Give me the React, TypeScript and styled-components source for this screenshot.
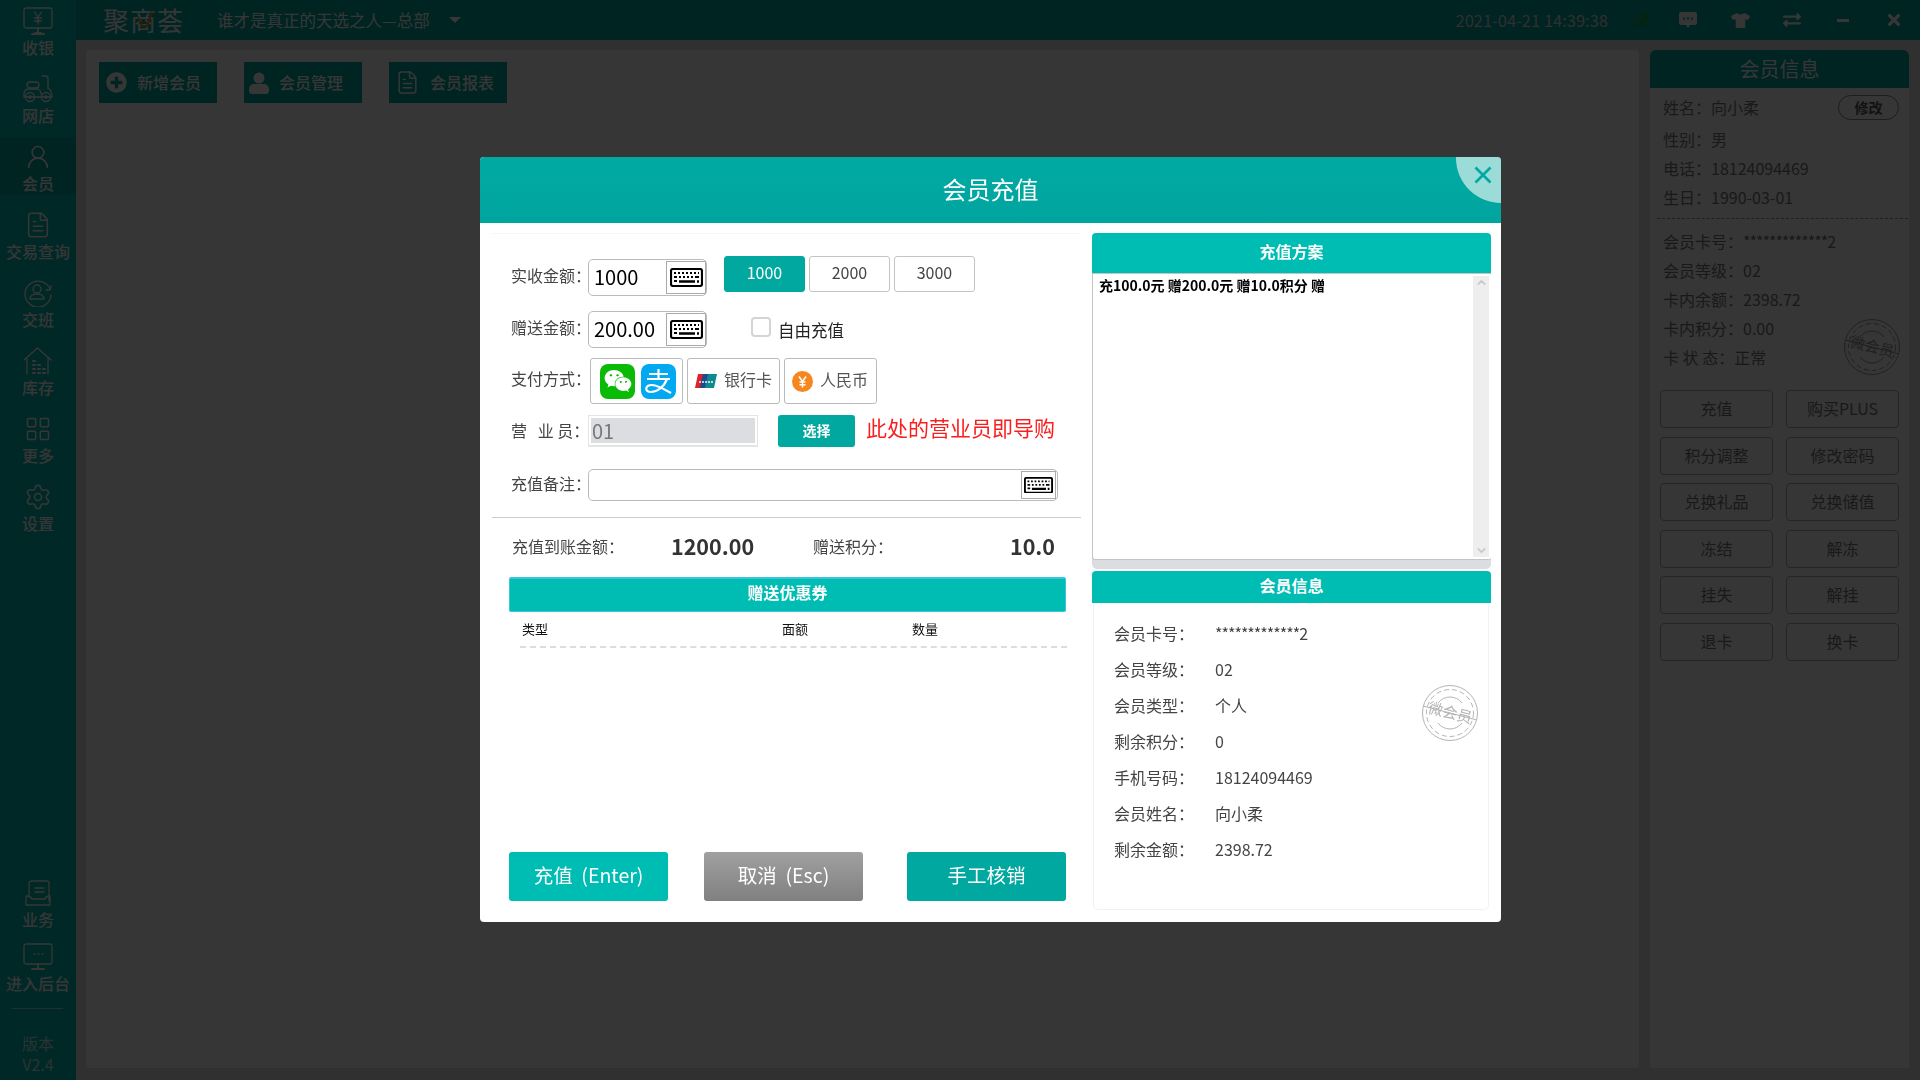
import React from 'react'
import styled, { createGlobalStyle } from 'styled-components'
import { ChevronDown, ChevronUp, FileText, LayoutGrid, Settings, UserRound } from 'lucide-react'
import { FaExchangeAlt, FaPlusCircle, FaTimes, FaTshirt, FaWeixin } from 'react-icons/fa'

const TEAL = '#00a8a0'
const TEAL_LIGHT = '#00bdb4'

const GlobalStyle = createGlobalStyle`
  html, body {
    margin: 0;
    padding: 0;
    background: #e0e0e0;
  }
  * {
    box-sizing: border-box;
  }
  body {
    font-family: "Noto Sans CJK SC", "Noto Sans", sans-serif;
    font-size: 16px;
    color: #333;
  }
`

/* ---------- page behind the dialog ---------- */

const Page = styled.div`
  display: flex;
  width: 1920px;
  height: 1080px;
  overflow: hidden;
`

const Sidebar = styled.nav`
  display: flex;
  flex: 0 0 76px;
  flex-direction: column;
  padding-top: 1px;
  background: ${TEAL_LIGHT};
  color: #fff;
`

const NavGroup = styled.div`
  display: flex;
  flex-direction: column;
  gap: 10px;
`

const NavBottom = styled(NavGroup)`
  margin-top: auto;
  gap: 6px;
`

const NavItem = styled.div<{ $active?: boolean }>`
  display: flex;
  flex-direction: column;
  align-items: center;
  height: 58px;
  padding-top: 6px;
  background: ${props => (props.$active ? TEAL : 'transparent')};
  svg {
    display: block;
    height: 28px;
    width: 30px;
  }
`

const NavLabel = styled.span`
  margin-top: 3px;
  font-size: 16px;
  font-weight: 500;
  line-height: 18px;
  white-space: nowrap;
`

const NavRule = styled.div`
  height: 1px;
  margin: 13px 13px 0 12px;
  background: rgba(255, 255, 255, 0.6);
`

const Version = styled.div`
  margin: 24px 0 5px;
  text-align: center;
  color: rgba(255, 255, 255, 0.75);
  div {
    line-height: 21px;
  }
`

const Main = styled.div`
  display: flex;
  flex: 1;
  flex-direction: column;
  min-width: 0;
`

const TopBar = styled.header`
  display: flex;
  flex: 0 0 40px;
  align-items: center;
  padding-left: 27px;
  background: ${TEAL};
  color: #fff;
`

const Logo = styled.div`
  position: relative;
  font-size: 26px;
  letter-spacing: 1px;
  line-height: 40px;
  white-space: nowrap;
  svg {
    position: absolute;
    left: 34px;
    top: 11px;
  }
`

const Branch = styled.div`
  margin-left: 33px;
  font-size: 16.5px;
  white-space: nowrap;
`

const Caret = styled.div`
  width: 0;
  height: 0;
  margin-left: 19px;
  border-left: 6px solid transparent;
  border-right: 6px solid transparent;
  border-top: 6px solid #fff;
`

const Clock = styled.div`
  margin-left: auto;
  margin-right: 12px;
  font-size: 16.5px;
  color: #ddd;
  white-space: nowrap;
`

const TopIcon = styled.div<{ $w: number }>`
  display: flex;
  flex: 0 0 ${props => props.$w}px;
  align-items: center;
  justify-content: center;
`

const Workspace = styled.div`
  display: flex;
  flex: 1;
  gap: 11px;
  padding: 10px 11px 12px 10px;
`

const Board = styled.section`
  display: flex;
  flex: 1;
  align-items: flex-start;
  gap: 27px;
  padding: 12px 13px;
  border-radius: 4px;
  background: #fff;
`

const ToolButton = styled.div<{ $pad: number }>`
  display: flex;
  align-items: center;
  gap: 10px;
  width: 118px;
  height: 41px;
  padding: 0 0 2px ${props => props.$pad}px;
  background: ${TEAL};
  color: #fff;
  font-weight: 500;
`

const ToolIcon = styled.div`
  display: flex;
  flex: 0 0 21px;
  align-items: center;
  justify-content: center;
  margin-top: 2px;
`

const MemberPanel = styled.aside`
  position: relative;
  display: flex;
  flex: 0 0 259px;
  flex-direction: column;
  border-radius: 6px 6px 0 0;
  background: #fff;
`

const MemberTitle = styled.div`
  height: 38px;
  border-radius: 6px 6px 0 0;
  background: ${TEAL};
  color: #fff;
  font-size: 20px;
  line-height: 38px;
  text-align: center;
`

const InfoBlock = styled.div`
  margin: 5px 1px 0 7px;
  padding: 0 0 6px 6px;
  border-bottom: 1px dashed #999;
  color: #777;
`

const InfoRow = styled.div<{ $gap?: number }>`
  display: flex;
  align-items: center;
  justify-content: space-between;
  height: 29px;
  margin-top: ${props => props.$gap ?? 0}px;
  line-height: 29px;
  white-space: pre;
`

const EditPill = styled.div`
  width: 61px;
  height: 25px;
  margin-right: 9px;
  border: 1px solid #888;
  border-radius: 13px;
  color: #555;
  font-size: 14px;
  font-weight: 700;
  line-height: 22px;
  text-align: center;
`

const CardBlock = styled.div`
  margin-top: 8px;
  padding-left: 13px;
  color: #777;
`

const Stars = styled.span`
  letter-spacing: -1px;
`

const ActionGrid = styled.div`
  display: grid;
  grid-template-columns: 113px 113px;
  grid-auto-rows: 38px;
  gap: 8.6px 13px;
  margin-top: 18px;
  padding: 0 10px;
`

const ActionButton = styled.div`
  border: 1px solid #b0b0b0;
  border-radius: 4px;
  color: #777;
  line-height: 34px;
  text-align: center;
`

const StampWrap = styled.div<{ $right: number; $top: number }>`
  position: absolute;
  right: ${props => props.$right}px;
  top: ${props => props.$top}px;
  width: 58px;
  height: 58px;
`

/* ---------- dialog ---------- */

const Overlay = styled.div`
  position: fixed;
  inset: 0;
  padding: 157px 0 0 480px;
  background: rgba(0, 0, 0, 0.79);
`

const Dialog = styled.div`
  position: relative;
  display: flex;
  flex-direction: column;
  width: 1021px;
  height: 765px;
  overflow: hidden;
  border-radius: 4px;
  background: #fff;
`

const DialogHead = styled.div`
  flex: 0 0 66px;
  background: linear-gradient(#00aaa3, #00a59e);
  color: #fff;
  font-size: 24px;
  line-height: 63px;
  text-align: center;
`

const CloseCorner = styled.div`
  position: absolute;
  top: 0;
  right: 0;
  display: flex;
  align-items: flex-start;
  justify-content: flex-end;
  width: 45px;
  height: 46px;
  padding: 9px 9px 0 0;
  border-bottom-left-radius: 46px;
  background: #9bdcd8;
  color: ${TEAL};
`

const DialogBody = styled.div`
  display: flex;
  flex: 1;
  min-height: 0;
`

const LeftCol = styled.div`
  display: flex;
  flex: 0 0 589px;
  flex-direction: column;
  margin: 10px 0 0 12px;
  padding-top: 22px;
  border-top: 1px solid #f6f6f6;
`

const FormRow = styled.div<{ $top?: number; $h: number }>`
  display: flex;
  align-items: center;
  height: ${props => props.$h}px;
  margin-top: ${props => props.$top ?? 0}px;
  padding-left: 19px;
`

const FieldLabel = styled.label<{ $up: number }>`
  flex: 0 0 77px;
  min-width: 0;
  margin-bottom: ${props => props.$up}px;
  font-size: 16px;
  color: #444;
  white-space: pre;
`

const AmountField = styled.div<{ $down?: number }>`
  display: flex;
  align-items: center;
  justify-content: space-between;
  width: 119px;
  height: 37px;
  margin-top: ${props => props.$down ?? 0}px;
  padding: 1px 0 1px 5px;
  border: 1px solid #bbb;
  border-radius: 5px;
  color: #000;
  font-size: 20px;
`

const AmountText = styled.span`
  margin-bottom: 2px;
`

const KeyButton = styled.div<{ $w: number }>`
  display: flex;
  flex: 0 0 ${props => props.$w}px;
  align-items: center;
  justify-content: center;
  height: 100%;
  border: 1px solid #aaa;
`

const QuickGroup = styled.div`
  display: flex;
  align-self: flex-start;
  gap: 4px;
  margin-left: 17px;
`

const QuickButton = styled.div<{ $on?: boolean }>`
  width: 81px;
  height: 36px;
  border: 1px solid ${props => (props.$on ? TEAL : '#c4c4c4')};
  border-radius: 3px;
  background: ${props => (props.$on ? TEAL : '#fff')};
  color: ${props => (props.$on ? '#fff' : '#444')};
  line-height: 31px;
  text-align: center;
`

const Check = styled.div`
  width: 20px;
  height: 20px;
  margin: -5px 0 0 44px;
  border: 2px solid #d4d4d4;
  border-radius: 4px;
`

const CheckText = styled.span`
  margin-left: 7px;
  font-size: 16.5px;
  color: #222;
`

const PayRow = styled.div`
  display: flex;
  gap: 4px;
  margin-left: 2px;
`

const PayTile = styled.div<{ $pad?: number }>`
  display: flex;
  align-items: center;
  width: 93px;
  height: 46px;
  padding-left: ${props => props.$pad ?? 0}px;
  border: 1px solid #bbb;
  border-radius: 3px;
  color: #555;
  font-size: 16px;
  white-space: nowrap;
`

const BrandTile = styled.div<{ $bg: string; $left: number }>`
  display: flex;
  align-items: center;
  justify-content: center;
  width: 35px;
  height: 35px;
  margin-left: ${props => props.$left}px;
  border-radius: 8px;
  background: ${props => props.$bg};
  color: #fff;
`

const PayText = styled.span`
  margin: 0 0 4px 7px;
`

const StaffField = styled.div`
  width: 170px;
  height: 32px;
  padding: 2px;
  border: 1px solid #e4e4e4;
  border-width: 1px 1px 2px 1px;
  color: #777;
  font-size: 20px;
  line-height: 25px;
`

const StaffValue = styled.div`
  width: 100%;
  height: 100%;
  padding-left: 1px;
  background: #dcdde0;
`

const PickButton = styled.div`
  width: 77px;
  height: 32px;
  margin-left: 20px;
  border-radius: 3px;
  background: ${TEAL};
  color: #fff;
  font-size: 14px;
  font-weight: 700;
  line-height: 31px;
  text-align: center;
`

const RedNote = styled.span`
  margin: -9px 0 0 11px;
  color: #fa1e1e;
  font-size: 21px;
  white-space: nowrap;
`

const NoteField = styled.div`
  display: flex;
  justify-content: flex-end;
  width: 470px;
  height: 32px;
  padding: 1px;
  border: 1px solid #bbb;
  border-radius: 5px;
`

const Rule = styled.div`
  height: 1px;
  margin-top: 16px;
  background: #ccc;
`

const Summary = styled.div`
  display: grid;
  grid-template-columns: 159px 142px 1fr auto;
  align-items: center;
  height: 26px;
  margin: 15px 0 4px;
  padding: 0 26px 0 20px;
  color: #444;
  line-height: 26px;
`

const SumValue = styled.strong`
  color: #333;
  font-size: 21.5px;
  font-weight: 700;
  line-height: 26px;
`

const CouponBar = styled.div`
  height: 35px;
  margin: 14px 15px 0 17px;
  border: 1px solid #3cc6dc;
  border-top-width: 2px;
  border-radius: 2px;
  background: ${TEAL_LIGHT};
  color: #fff;
  font-weight: 700;
  line-height: 26px;
  text-align: center;
`

const CouponHead = styled.div`
  display: grid;
  grid-template-columns: 260px 130px 1fr;
  align-items: center;
  height: 36px;
  margin: 0 14px 0 28px;
  padding: 0 0 2px 2px;
  border-bottom: 2px dashed #ddd;
  color: #111;
  font-size: 13px;
`

const Footer = styled.div`
  display: flex;
  gap: 36px;
  margin: auto 15px 21px 17px;
`

const BigButton = styled.div<{ $tone: 'light' | 'gray' | 'dark' }>`
  width: 159px;
  height: 49px;
  border-radius: 3px;
  background: ${props =>
    props.$tone === 'light'
      ? TEAL_LIGHT
      : props.$tone === 'dark'
        ? TEAL
        : 'linear-gradient(#a0a0a0, #808080)'};
  color: #fff;
  font-size: 19.5px;
  line-height: 46px;
  text-align: center;
  white-space: pre;
  &:last-child {
    margin-left: auto;
  }
`

const RightCol = styled.div`
  display: flex;
  flex: 0 0 399px;
  flex-direction: column;
  margin: 10px 0 12px 11px;
`

const PlanTitle = styled.div<{ $h: number; $gap?: number }>`
  height: ${props => props.$h}px;
  margin-top: ${props => props.$gap ?? 0}px;
  border-radius: 4px 4px 0 0;
  background: ${TEAL_LIGHT};
  color: #fff;
  font-weight: 700;
  line-height: ${props => props.$h - 3}px;
  text-align: center;
`

const PlanFrame = styled.div`
  height: 296px;
  padding-bottom: 9px;
  border-radius: 0 0 5px 5px;
  background: #dcdde0;
`

const PlanList = styled.div`
  display: flex;
  height: 100%;
  padding: 2px 2px 2px 6px;
  border: 1px solid #c4c4c4;
  border-right: 0;
  border-radius: 0 0 3px 3px;
  background: #fff;
`

const PlanText = styled.div`
  flex: 1;
  color: #000;
  font-size: 14px;
  font-weight: 700;
  line-height: 18px;
`

const Track = styled.div`
  display: flex;
  flex: 0 0 16px;
  flex-direction: column;
  align-items: center;
  justify-content: space-between;
  background: #eee;
  color: #c8c8c8;
`

const MemberCard = styled.div`
  position: relative;
  flex: 1;
  margin: 0 2px 0 1px;
  padding: 13px 0 0 20px;
  border: 1px solid #eef3f3;
  border-top: 0;
  border-radius: 0 0 5px 5px;
`

const CardRow = styled.div`
  display: flex;
  height: 36px;
  color: #444;
  line-height: 35px;
`

const CardKey = styled.span`
  flex: 0 0 101px;
  white-space: nowrap;
`

const CoinSlot = styled.div`
  display: flex;
  flex: none;
  margin-left: 7px;
`

/* ---------- drawings ---------- */

const Keyboard: React.FC<{ w?: number }> = ({ w = 33 }) => (
  <svg width={w} height={(w * 19) / 33} viewBox="0 0 33 19">
    <rect x="1" y="1" width="31" height="17" rx="2" fill="#fff" stroke="#000" strokeWidth="2.2" />
    <path
      d="M4 5h2M8 5h2M12 5h2M16 5h2M20 5h2M24 5h2M28 5h1M4 9h3M9 9h2M13 9h2M17 9h2M21 9h2M25 9h4M4 13h3"
      stroke="#000"
      strokeWidth="2"
      fill="none"
    />
    <path d="M9 13.5h16M27 13.5h2" stroke="#000" strokeWidth="2.4" fill="none" />
  </svg>
)

const Stamp: React.FC<{ color: string }> = ({ color }) => (
  <svg width="58" height="58" viewBox="0 0 58 58" fill="none" stroke={color}>
    <circle cx="29" cy="29" r="27.5" />
    <circle cx="29" cy="29" r="23.5" strokeDasharray="5 3" />
    <path d="M17 19a15 15 0 0 1 24 0M41 39a15 15 0 0 1-24 0" />
    <path d="M2 22l54 14" />
    <text
      x="29"
      y="34"
      fill={color}
      stroke="none"
      fontSize="15"
      textAnchor="middle"
      transform="rotate(14 29 29)"
      fontFamily="'Noto Sans CJK SC', sans-serif"
    >
      微会员
    </text>
  </svg>
)

const AlipayMark = () => (
  <svg width="29" height="27" viewBox="0 0 29 27" fill="none" stroke="#fff" strokeWidth="2.2">
    <path d="M5 6h19M14.5 1v9M3 11h23" />
    <path d="M23 11c-3 8-10 13-16 13-7 0-6-7 1-7 5 0 12 4 19 8" />
  </svg>
)

const UnionPay = () => (
  <svg width="22" height="14" viewBox="0 0 22 14">
    <path d="M3 0h7L7 14H0z" fill="#d9232e" />
    <path d="M8 0h7l-3 14H5z" fill="#1a4b8c" />
    <path d="M13 0h9l-3 14h-9z" fill="#0d8a8e" />
    <path d="M4 8h14" stroke="#fff" strokeWidth="2" opacity="0.7" strokeDasharray="2 1" />
  </svg>
)

const YuanCoin = () => (
  <svg width="21" height="21" viewBox="0 0 21 21">
    <circle cx="10.5" cy="10.5" r="10.5" fill="#f6871f" />
    <path
      d="M7 5.5l3.5 5 3.5-5M10.5 10.5v6M7.5 11h6M7.5 13.8h6"
      stroke="#fff"
      strokeWidth="1.5"
      fill="none"
    />
  </svg>
)

const ChatBubble = () => (
  <svg width="18" height="16" viewBox="0 0 18 16">
    <path d="M2 0h14a2 2 0 0 1 2 2v9a2 2 0 0 1-2 2h-5l-2 3-2-3H2a2 2 0 0 1-2-2V2a2 2 0 0 1 2-2z" fill="#fff" />
    <path d="M4 6.500h2M8 6.500h2M12 6.500h2" stroke="#00a8a0" strokeWidth="2" />
  </svg>
)

const PersonSolid = () => (
  <svg width="20" height="22" viewBox="0 0 20 22" fill="#fff">
    <circle cx="10" cy="6" r="5.500" />
    <path d="M0 18c0-4 2-6 5-6h10c3 0 5 2 5 6v1c0 2-1 3-3 3H3c-2 0-3-1-3-3z" />
  </svg>
)

const stroke = {
  fill: 'none',
  stroke: 'currentColor',
  strokeWidth: 1.3,
  strokeLinecap: 'round' as const,
  strokeLinejoin: 'round' as const
}

const CashIcon = () => (
  <svg viewBox="0 0 30 28" {...stroke}>
    <rect x="1" y="1" width="28" height="20" rx="2" />
    <path d="M12 26h6M15 21v5M9 27h12" strokeWidth="1.8" />
    <path d="M11.5 5l3.5 5 3.5-5M15 10v7M11.5 11h7M11.5 14h7" />
  </svg>
)

const ScooterIcon = () => (
  <svg viewBox="0 0 30 28" {...stroke}>
    <rect x="4" y="7" width="12" height="6" rx="3" />
    <path d="M19 1h4c1 0 2 1 2 3v9" />
    <path d="M25 13c3 2 4 5 4 8M1 22v-3c0-3 2-5 5-5h8c2 0 4 2 4 5M1 22h28" />
    <circle cx="7" cy="22" r="4.5" />
    <circle cx="23" cy="22" r="4.5" />
    <circle cx="7" cy="22" r="1.2" />
    <circle cx="23" cy="22" r="1.2" />
  </svg>
)

const ShiftIcon = () => (
  <svg viewBox="0 0 30 28" {...stroke}>
    <path d="M27 10A13 13 0 1 0 28 16" />
    <path d="M23 11l4 0 1-4" />
    <circle cx="14" cy="10" r="4" />
    <path d="M7 20c0-3 3-5 7-5s7 2 7 5z" />
  </svg>
)

const StockIcon = () => (
  <svg viewBox="0 0 30 28" {...stroke}>
    <path d="M1 13L14.500 1 28 13M4 11v16M25 11v16" />
    <path d="M10 14h2M10 18h2M15 18h2M10 22h2M15 22h2M20 22h2M10 26h2M15 26h2M20 26h2" strokeWidth="2" />
  </svg>
)

const TaskIcon = () => (
  <svg viewBox="0 0 30 28" {...stroke}>
    <path d="M6 16V5c0-2 1-3 3-3h15c1 0 2 1 2 2v18M3 17c2 0 5 0 6 3h13c1-3 3-3 5-3v9H3z" />
    <path d="M12 9h9M12 13h9" />
  </svg>
)

const AdminIcon = () => (
  <svg viewBox="0 0 30 28" {...stroke}>
    <rect x="1" y="1" width="28" height="20" rx="2" />
    <path d="M9 26h12M15 21v5" strokeWidth="1.8" />
    <path d="M11 11h1M15 11h1M19 11h1" />
  </svg>
)

const WifiMark = () => (
  <svg width="16" height="16" viewBox="0 0 16 16" fill="none" stroke="#22a020" strokeWidth="2.4">
    <path d="M1 15a14 14 0 0 1 14-14" opacity="0.6" />
    <path d="M6 15a9 9 0 0 1 9-9" />
    <circle cx="13.500" cy="13.500" r="1.800" fill="#22a020" stroke="none" />
  </svg>
)

const navTop = [
  { label: '收银', icon: <CashIcon /> },
  { label: '网店', icon: <ScooterIcon /> },
  { label: '会员', icon: <UserRound strokeWidth={1.4} />, active: true },
  { label: '交易查询', icon: <FileText strokeWidth={1.3} /> },
  { label: '交班', icon: <ShiftIcon /> },
  { label: '库存', icon: <StockIcon /> },
  { label: '更多', icon: <LayoutGrid strokeWidth={1.3} /> },
  { label: '设置', icon: <Settings strokeWidth={1.3} /> }
]

const actions = [
  '充值',
  '购买PLUS',
  '积分调整',
  '修改密码',
  '兑换礼品',
  '兑换储值',
  '冻结',
  '解冻',
  '挂失',
  '解挂',
  '退卡',
  '换卡'
]

const CARD_STARS = '*************'

const memberRows: [string, React.ReactNode][] = [
  ['会员卡号\uFF1A', <><Stars>{CARD_STARS}</Stars>2</>],
  ['会员等级\uFF1A', '02'],
  ['会员类型\uFF1A', '个人'],
  ['剩余积分\uFF1A', '0'],
  ['手机号码\uFF1A', '18124094469'],
  ['会员姓名\uFF1A', '向小柔'],
  ['剩余金额\uFF1A', '2398.72']
]

const App: React.FC = () => (
  <>
    <GlobalStyle />
    <Page>
      <Sidebar>
        <NavGroup>
          {navTop.map(item => (
            <NavItem key={item.label} $active={item.active}>
              {item.icon}
              <NavLabel>{item.label}</NavLabel>
            </NavItem>
          ))}
        </NavGroup>
        <NavBottom>
          <NavItem>
            <TaskIcon />
            <NavLabel>业务</NavLabel>
          </NavItem>
          <NavItem>
            <AdminIcon />
            <NavLabel>进入后台</NavLabel>
          </NavItem>
        </NavBottom>
        <NavRule />
        <Version>
          <div>版本</div>
          <div>V2.4</div>
        </Version>
      </Sidebar>
      <Main>
        <TopBar>
          <Logo>
            聚商荟
            <svg width="16" height="17" viewBox="0 0 16 17" fill="none" stroke="#e8860a" strokeWidth="2">
              <path d="M1 7l4 8h5l5-14" />
            </svg>
          </Logo>
          <Branch>谁才是真正的天选之人—总部</Branch>
          <Caret />
          <Clock>2021-04-21 14:39:38</Clock>
          <TopIcon $w={42}>
            <WifiMark />
          </TopIcon>
          <TopIcon $w={52}>
            <ChatBubble />
          </TopIcon>
          <TopIcon $w={52}>
            <FaTshirt size={19} />
          </TopIcon>
          <TopIcon $w={52}>
            <FaExchangeAlt size={18} />
          </TopIcon>
          <TopIcon $w={50}>
            <svg width="12" height="3" viewBox="0 0 12 3">
              <rect width="12" height="3" fill="#fff" />
            </svg>
          </TopIcon>
          <TopIcon $w={52}>
            <FaTimes size={18} />
          </TopIcon>
        </TopBar>
        <Workspace>
          <Board>
            <ToolButton $pad={7}>
              <ToolIcon>
                <FaPlusCircle size={21} />
              </ToolIcon>
              新增会员
            </ToolButton>
            <ToolButton $pad={4}>
              <ToolIcon>
                <PersonSolid />
              </ToolIcon>
              会员管理
            </ToolButton>
            <ToolButton $pad={6}>
              <ToolIcon>
                <FileText size={25} strokeWidth={1.4} />
              </ToolIcon>
              会员报表
            </ToolButton>
          </Board>
          <MemberPanel>
            <MemberTitle>会员信息</MemberTitle>
            <InfoBlock>
              <InfoRow>
                <span>{'姓名\uFF1A向小柔'}</span>
                <EditPill>修改</EditPill>
              </InfoRow>
              <InfoRow $gap={3}>{'性别\uFF1A男'}</InfoRow>
              <InfoRow>{'电话\uFF1A18124094469'}</InfoRow>
              <InfoRow>{'生日\uFF1A1990-03-01'}</InfoRow>
            </InfoBlock>
            <CardBlock>
              <InfoRow>
                <span>
                  {'会员卡号\uFF1A'}
                  <Stars>{CARD_STARS}</Stars>2
                </span>
              </InfoRow>
              <InfoRow>{'会员等级\uFF1A02'}</InfoRow>
              <InfoRow>{'卡内余额\uFF1A2398.72'}</InfoRow>
              <InfoRow>{'卡内积分\uFF1A0.00'}</InfoRow>
              <InfoRow>{'卡 状 态\uFF1A正常'}</InfoRow>
            </CardBlock>
            <StampWrap $right={8} $top={268}>
              <Stamp color="#999" />
            </StampWrap>
            <ActionGrid>
              {actions.map(name => (
                <ActionButton key={name}>{name}</ActionButton>
              ))}
            </ActionGrid>
          </MemberPanel>
        </Workspace>
      </Main>
    </Page>

    <Overlay>
      <Dialog>
        <DialogHead>会员充值</DialogHead>
        <CloseCorner>
          <svg width="18" height="18" viewBox="0 0 18 18" stroke="currentColor" strokeWidth="2.6">
            <path d="M1.500 1.500l15 15M16.500 1.500l-15 15" />
          </svg>
        </CloseCorner>
        <DialogBody>
          <LeftCol>
            <FormRow $h={40}>
              <FieldLabel $up={3}>{'实收金额\uFF1A'}</FieldLabel>
              <AmountField $down={3}>
                <AmountText>1000</AmountText>
                <KeyButton $w={40}>
                  <Keyboard />
                </KeyButton>
              </AmountField>
              <QuickGroup>
                <QuickButton $on>1000</QuickButton>
                <QuickButton>2000</QuickButton>
                <QuickButton>3000</QuickButton>
              </QuickGroup>
            </FormRow>
            <FormRow $h={37} $top={15}>
              <FieldLabel $up={5}>{'赠送金额\uFF1A'}</FieldLabel>
              <AmountField>
                <AmountText>200.00</AmountText>
                <KeyButton $w={40}>
                  <Keyboard />
                </KeyButton>
              </AmountField>
              <Check />
              <CheckText>自由充值</CheckText>
            </FormRow>
            <FormRow $h={46} $top={10}>
              <FieldLabel $up={6}>{'支付方式\uFF1A'}</FieldLabel>
              <PayRow>
                <PayTile>
                  <BrandTile $bg="#09bb07" $left={9}>
                    <FaWeixin size={28} />
                  </BrandTile>
                  <BrandTile $bg="#02a9f1" $left={6}>
                    <AlipayMark />
                  </BrandTile>
                </PayTile>
                <PayTile $pad={7}>
                  <UnionPay />
                  <PayText>银行卡</PayText>
                </PayTile>
                <PayTile>
                  <CoinSlot>
                    <YuanCoin />
                  </CoinSlot>
                  <PayText>人民币</PayText>
                </PayTile>
              </PayRow>
            </FormRow>
            <FormRow $h={32} $top={11}>
              <FieldLabel $up={2}>{'营   业 员\uFF1A'}</FieldLabel>
              <StaffField>
                <StaffValue>01</StaffValue>
              </StaffField>
              <PickButton>选择</PickButton>
              <RedNote>此处的营业员即导购</RedNote>
            </FormRow>
            <FormRow $h={32} $top={22}>
              <FieldLabel $up={5}>{'充值备注\uFF1A'}</FieldLabel>
              <NoteField>
                <KeyButton $w={35}>
                  <Keyboard w={29} />
                </KeyButton>
              </NoteField>
            </FormRow>
            <Rule />
            <Summary>
              <span>{'充值到账金额\uFF1A'}</span>
              <SumValue>1200.00</SumValue>
              <span>{'赠送积分\uFF1A'}</span>
              <SumValue>10.0</SumValue>
            </Summary>
            <CouponBar>赠送优惠券</CouponBar>
            <CouponHead>
              <span>类型</span>
              <span>面额</span>
              <span>数量</span>
            </CouponHead>
            <Footer>
              <BigButton $tone="light">{'充值  (Enter)'}</BigButton>
              <BigButton $tone="gray">{'取消  (Esc)'}</BigButton>
              <BigButton $tone="dark">手工核销</BigButton>
            </Footer>
          </LeftCol>
          <RightCol>
            <PlanTitle $h={40}>充值方案</PlanTitle>
            <PlanFrame>
              <PlanList>
                <PlanText>充100.0元 赠200.0元 赠10.0积分 赠</PlanText>
                <Track>
                  <ChevronUp size={13} strokeWidth={3} />
                  <ChevronDown size={13} strokeWidth={3} />
                </Track>
              </PlanList>
            </PlanFrame>
            <PlanTitle $h={32} $gap={2}>
              会员信息
            </PlanTitle>
            <MemberCard>
              {memberRows.map(([key, value]) => (
                <CardRow key={key}>
                  <CardKey>{key}</CardKey>
                  <span>{value}</span>
                </CardRow>
              ))}
              <StampWrap $right={9} $top={81}>
                <Stamp color="#b4b4b4" />
              </StampWrap>
            </MemberCard>
          </RightCol>
        </DialogBody>
      </Dialog>
    </Overlay>
  </>
)

export default App
